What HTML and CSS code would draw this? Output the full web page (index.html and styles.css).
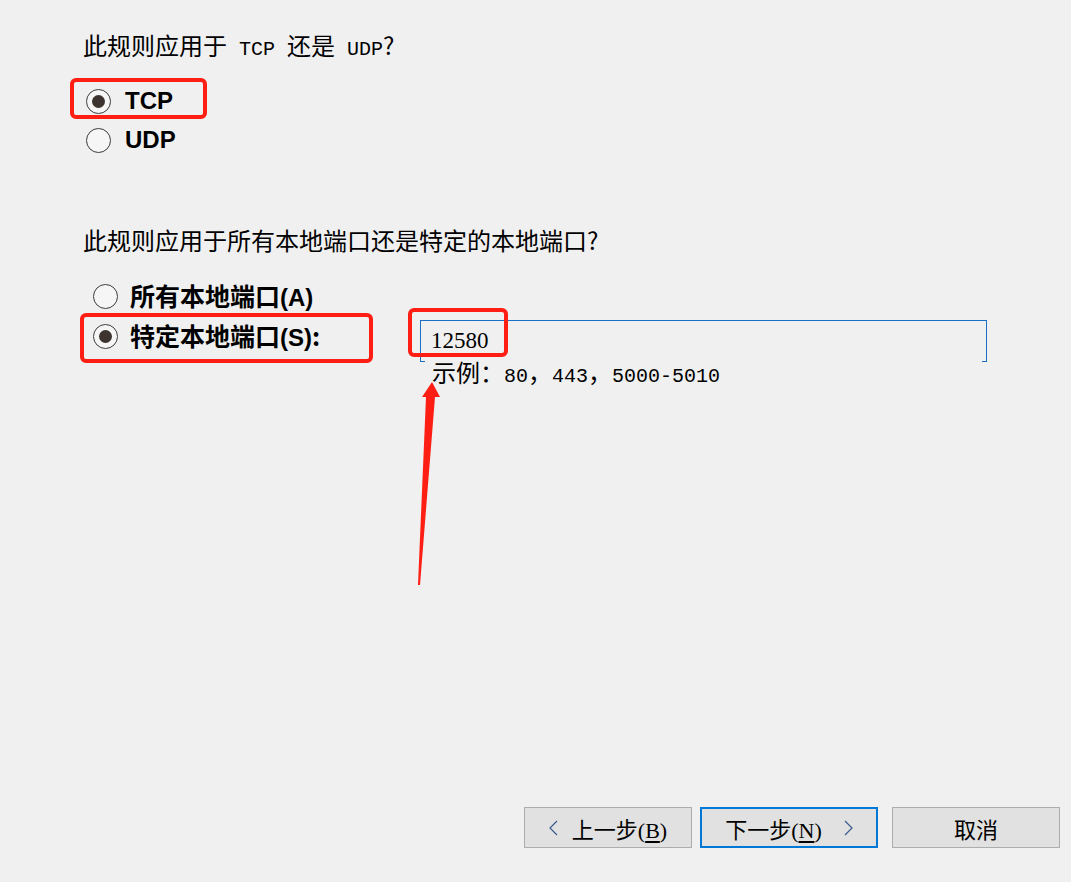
FILE: index.html
```html
<!DOCTYPE html>
<html lang="zh-CN">
<head>
    <meta charset="UTF-8">
    <title>协议和端口</title>
    <link rel="stylesheet" href="styles.css">
</head>
<body>
    <div class="page">
        <div class="wizard">
            <p class="question">此规则应用于<span class="latin"> TCP </span>还是<span class="latin"> UDP</span>?</p>
            <div class="options proto">
                <label class="option mark-tcp"><span class="radio checked"></span><span class="opt-text">TCP</span></label>
                <label class="option"><span class="radio"></span><span class="opt-text">UDP</span></label>
            </div>

            <p class="question q2">此规则应用于所有本地端口还是特定的本地端口?</p>
            <div class="options ports">
                <label class="option"><span class="radio"></span><span class="opt-text">所有本地端口<span class="key">(A)</span></span></label>
                <div class="port-row">
                    <label class="option port-label mark-port"><span class="radio checked"></span><span class="opt-text">特定本地端口<span class="key">(S)</span>:</span></label>
                    <div class="port-field">
                        <div class="port-input">12580</div>
                        <div class="hint">示例：<span class="num">80</span>，<span class="num">443</span>，<span class="num">5000-5010</span></div>
                    </div>
                </div>
            </div>
        </div>

        <svg class="arrow" width="35" height="210" viewBox="0 0 35 210">
            <polygon points="22,3 30,18 25,18 10,206 8,206 16,18 12,18" fill="#ff1e14"/>
        </svg>

        <div class="buttons">
            <button class="btn back">
                <svg width="9" height="16" viewBox="0 0 9 16"><polyline points="8,1 1,8 8,15" fill="none" stroke="#3a5a8c" stroke-width="1.2"/></svg>
                <span>上一步(<u>B</u>)</span>
            </button>
            <button class="btn next">
                <span>下一步(<u>N</u>)</span>
                <svg width="9" height="16" viewBox="0 0 9 16"><polyline points="1,1 8,8 1,15" fill="none" stroke="#3a5a8c" stroke-width="1.2"/></svg>
            </button>
            <button class="btn cancel">取消</button>
        </div>
    </div>
</body>
</html>
```

FILE: styles.css
```css
body {
    margin: 0;
    padding: 0;
    background-color: #f0f0f0;
    font-family: "Noto Sans CJK SC", "Liberation Sans", sans-serif;
    color: #000;
}
.page {
    position: relative;
    height: 882px;
    display: flex;
    flex-direction: column;
}
.wizard {
    padding-left: 83px;
}
.question {
    margin: 31px 0 0 0;
    font-size: 24px;
    line-height: 28px;
    font-weight: normal;
}
.question.q2 {
    margin-top: 73px;
}
.latin {
    font-family: "Liberation Mono", monospace;
    font-size: 20px;
}
.options {
    display: flex;
    flex-direction: column;
}
.options.proto {
    margin-top: 24px;
    padding-left: 3px;
    gap: 13px;
}
.options.ports {
    margin-top: 29px;
    padding-left: 10px;
    gap: 14px;
}
.option {
    position: relative;
    display: flex;
    align-items: center;
    height: 26px;
    gap: 14px;
}
.ports .option {
    gap: 12px;
}
.radio {
    box-sizing: border-box;
    width: 25px;
    height: 25px;
    border: 1px solid #3b3b3b;
    border-radius: 50%;
    background: #f6f6f6;
    display: flex;
    align-items: center;
    justify-content: center;
}
.radio.checked::before {
    content: "";
    width: 13px;
    height: 13px;
    border-radius: 50%;
    background: #3d3430;
}
.opt-text {
    font-weight: bold;
    font-size: 25px;
    line-height: 26px;
}
.key {
    font-family: "Liberation Sans", sans-serif;
    font-size: 24px;
}
.proto .opt-text {
    font-family: "Liberation Sans", sans-serif;
    font-size: 24px;
}
.port-row {
    display: flex;
    align-items: flex-start;
    margin-top: -3px;
}
.port-label {
    width: 327px;
    margin-top: 3px;
    flex-shrink: 0;
}
.port-field {
    position: relative;
    display: flex;
    flex-direction: column;
}
.port-input {
    position: relative;
    box-sizing: border-box;
    width: 567px;
    height: 42px;
    border: 1px solid #1a6fc4;
    border-bottom: none;
    padding: 5px 0 0 10px;
    font-family: "Liberation Serif", serif;
    font-size: 23px;
    line-height: 30px;
}
.port-input::before,
.port-input::after {
    content: "";
    position: absolute;
    bottom: 0;
    width: 5px;
    border-bottom: 1px solid #1a6fc4;
}
.port-input::before {
    left: -1px;
}
.port-input::after {
    right: -1px;
}
.hint {
    margin: -3px 0 0 12px;
    font-size: 24px;
    line-height: 26px;
}
.num {
    font-family: "Liberation Mono", monospace;
    font-size: 20px;
}

/* red highlight frames */
.mark-tcp::after,
.mark-port::after,
.port-field::after {
    content: "";
    position: absolute;
    border: 4px solid #ff1e14;
    border-radius: 6px;
}
.mark-tcp::after {
    left: -16px;
    top: -10px;
    width: 129px;
    height: 33px;
}
.mark-port::after {
    left: -13px;
    top: -10px;
    width: 285px;
    height: 42px;
}
.port-field::after {
    left: -12px;
    top: -12px;
    width: 92px;
    height: 41px;
}
.arrow {
    position: absolute;
    left: 410px;
    top: 379px;
}

.buttons {
    margin-top: auto;
    margin-bottom: 34px;
    display: flex;
    justify-content: flex-end;
    padding-right: 11px;
    gap: 8px;
}
.btn {
    box-sizing: border-box;
    height: 41px;
    width: 168px;
    background: #e1e1e1;
    border: 1px solid #adadad;
    font-family: "Liberation Serif", "Noto Sans CJK SC", serif;
    font-size: 22px;
    color: #000;
    display: flex;
    align-items: center;
    justify-content: center;
    gap: 14px;
    padding: 0;
}
.btn.next {
    width: 178px;
    border: 2px solid #0078d7;
    gap: 22px;
}
.btn.cancel {
    margin-left: 6px;
}
.btn u {
    text-underline-offset: 3px;
}
```
